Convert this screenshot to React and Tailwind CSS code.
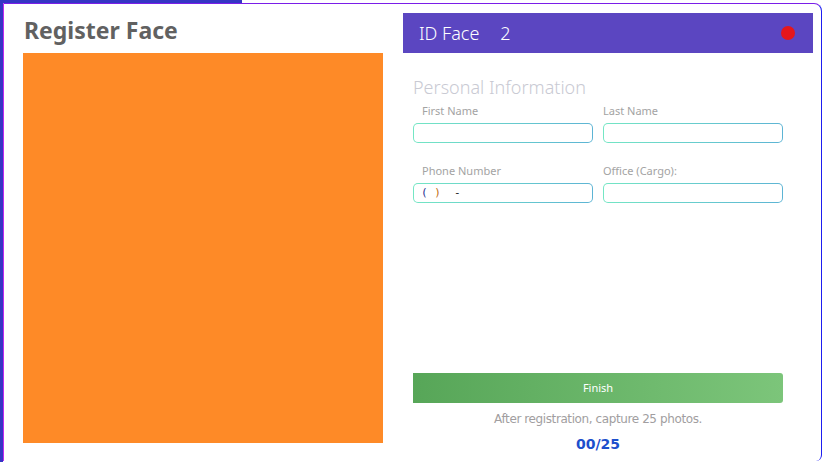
import React from "react";

const ui = { fontFamily: '"Noto Sans", "Open Sans", sans-serif' };

function Field({ label, indent = true, children }) {
  return (
    <div className="flex flex-col w-[180px]">
      <span className={`text-[11px] leading-[14px] text-[#a3a3a3] h-[20px] pt-[1px] ${indent ? "pl-[9px]" : "pl-0"}`}>{label}</span>
      <div className="rounded-[5px] p-px bg-gradient-to-r from-[#74e6c4] to-[#5db4d4] h-[20px]">
        <div className="bg-white rounded-[4px] h-full flex items-center px-[7px]">{children}</div>
      </div>
    </div>
  );
}

export default function App() {
  return (
    <div className="relative w-[824px] h-[462px] bg-white overflow-hidden" style={ui}>
      {/* window behind the card */}
      <div className="absolute left-0 top-0 w-[242px] h-[3px] bg-[#3535c4]" />
      <div className="absolute left-0 top-0 w-[3px] h-[462px] bg-[#3535c4]" />

      <div className="absolute left-[3px] top-[3px] w-[819px] h-[458px] border-t border-l border-r border-t-[#7a1ee8] border-l-[#c028f0] border-r-[#1e1ef0] rounded-tr-[8px] rounded-br-[6px] bg-white flex pl-[19px] pr-[8px]">
        <div className="flex flex-col w-[360px]">
          <h1 className="text-[23px] font-bold text-[#616161] leading-[28px] mt-[12px] h-[37px] pl-px">Register Face</h1>
          <div className="w-[360px] h-[390px] bg-[#fe8a27]" />
        </div>

        <div className="ml-[20px] w-[410px] flex flex-col pt-[9px]">
          <div className="h-[40px] bg-[#5b46c1] flex items-center px-[16px] text-white">
            <span className="text-[18px] font-light leading-none">ID Face</span>
            <span className="text-[18px] font-light leading-none ml-[21px]">2</span>
            <span className="ml-auto w-[14px] h-[14px] rounded-full bg-[#e5161b] mr-[2px]" />
          </div>

          <div className="px-[10px]">
            <div className="text-[18px] font-light text-[#c9cad3] mt-[23px] leading-[22px]">Personal Information</div>
            <div className="flex gap-[10px] mt-[5px]">
              <Field label="First Name" />
              <Field label="Last Name" indent={false} />
            </div>
            <div className="flex gap-[10px] mt-[20px]">
              <Field label="Phone Number">
                <span className="text-[11px] text-[#222] whitespace-pre" style={{ fontFamily: '"DejaVu Sans Mono", monospace' }}>
                  <span className="text-[#1f2f8f]">(</span> <span className="text-[#c06a10]">)</span>{"  -"}
                </span>
              </Field>
              <Field label="Office (Cargo):" indent={false} />
            </div>
          </div>

          <div className="flex-1" />

          <div className="px-[10px] w-[390px]">
            <button className="w-[370px] h-[30px] rounded-r-[3px] bg-gradient-to-r from-[#57a658] to-[#7cc57a] text-white text-[11px]">
              Finish
            </button>
            <p className="w-[370px] text-center text-[12px] text-[#a19ea0] mt-[8px] leading-[16px]" style={{ fontFamily: '"DejaVu Sans", sans-serif', letterSpacing: "-0.4px" }}>
              After registration, capture 25 photos.
            </p>
            <p className="w-[370px] text-center text-[14px] font-bold text-[#1d4fcc] mt-[8px] leading-[18px] mb-[8px]" style={{ fontFamily: '"DejaVu Sans", sans-serif' }}>
              00/25
            </p>
          </div>
        </div>
      </div>
    </div>
  );
}
